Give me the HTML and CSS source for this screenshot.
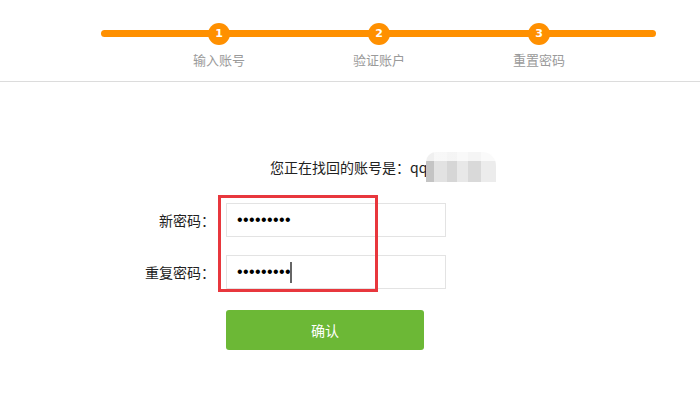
FILE: index.html
```html
<!DOCTYPE html>
<html lang="zh">
<head>
<meta charset="utf-8">
<title>重置密码</title>
<link rel="stylesheet" href="styles.css">
</head>
<body>
<header class="header">
  <div class="track">
    <div class="step"><span class="num">1</span><span class="label">输入账号</span></div>
    <div class="step"><span class="num">2</span><span class="label">验证账户</span></div>
    <div class="step"><span class="num">3</span><span class="label">重置密码</span></div>
  </div>
</header>
<main class="main">
  <div class="account">
    <span class="account-text">您正在找回的账号是：qq</span>
    <span class="mosaic"></span>
  </div>
  <form class="form">
    <div class="highlight"></div>
    <div class="row">
      <label class="field-label">新密码：</label>
      <input class="field" type="password" value="123456789">
    </div>
    <div class="row">
      <label class="field-label">重复密码：</label>
      <div class="field-wrap">
        <input class="field" type="password" value="123456789">
        <span class="caret"></span>
      </div>
    </div>
    <div class="row">
      <span class="field-label"></span>
      <button class="submit" type="button">确认</button>
    </div>
  </form>
</main>
</body>
</html>
```

FILE: styles.css
```css
* { box-sizing: border-box; }
body {
  margin: 0;
  background: #fff;
  font-family: "Noto Sans CJK SC", "Noto Sans", sans-serif;
  color: #333;
}
.header {
  height: 82px;
  border-bottom: 1px solid #dcdcdc;
  padding-top: 30px;
}
.track {
  margin-left: 101px;
  width: 555px;
  height: 7px;
  border-radius: 4px;
  background: #ff9000;
  display: flex;
  padding-left: 38px;
}
.step {
  width: 160px;
  flex: none;
  display: flex;
  flex-direction: column;
  align-items: center;
  margin-top: -7px;
}
.num {
  width: 22px;
  height: 22px;
  border-radius: 50%;
  background: #ff9000;
  color: #fff;
  font-family: "DejaVu Sans", sans-serif;
  font-weight: bold;
  font-size: 11px;
  line-height: 22px;
  text-align: center;
}
.label {
  margin-top: 6px;
  font-size: 13px;
  line-height: 18px;
  color: #9a9a9a;
}
.main { position: relative; }
.account {
  display: flex;
  align-items: center;
  padding-left: 270px;
  margin-top: 70px;
  height: 30px;
}
.account-text {
  font-size: 14px;
  line-height: 18px;
  color: #222;
}
.mosaic {
  width: 70px;
  height: 30px;
  margin-left: -1px;
  border-radius: 10px 14px 0 0;
  background:
    linear-gradient(to bottom, rgba(255,255,255,0.75) 0, rgba(255,255,255,0.75) 30%, rgba(255,255,255,0) 30%),
    linear-gradient(to right, #c4c4c4 0, #c4c4c4 12%, #e2e2e2 12%, #e2e2e2 30%, #d6d6d6 30%, #d6d6d6 45%, #e8e8e8 45%, #e8e8e8 60%, #d9d9d9 60%, #d9d9d9 78%, #ececec 78%);
}
.form {
  position: relative;
  margin-top: 21px;
  display: flex;
  flex-direction: column;
  gap: 18px;
}
.form .row:last-child { margin-top: 3px; }
.row {
  display: flex;
  align-items: center;
}
.field-label {
  width: 215px;
  margin-right: 11px;
  text-align: right;
  font-size: 14px;
  color: #222;
}
.field-wrap { position: relative; }
.field {
  display: block;
  width: 220px;
  height: 34px;
  border: 1px solid #e3e3e3;
  padding: 0 10px;
  font-family: "Liberation Sans", sans-serif;
  font-size: 16px;
  letter-spacing: 0.4px;
  color: #000;
  outline: none;
  background: #fff;
}
.caret {
  position: absolute;
  left: 64px;
  top: 7px;
  width: 2px;
  height: 21px;
  background: #666;
}
.highlight {
  position: absolute;
  left: 218px;
  top: -8px;
  width: 160px;
  height: 97px;
  border: 3px solid #e8373d;
  z-index: 2;
  pointer-events: none;
}
.submit {
  width: 198px;
  height: 40px;
  border: none;
  border-radius: 3px;
  background: #6cb836;
  color: #fff;
  font-family: "Noto Sans CJK SC", sans-serif;
  font-size: 14px;
}
```
